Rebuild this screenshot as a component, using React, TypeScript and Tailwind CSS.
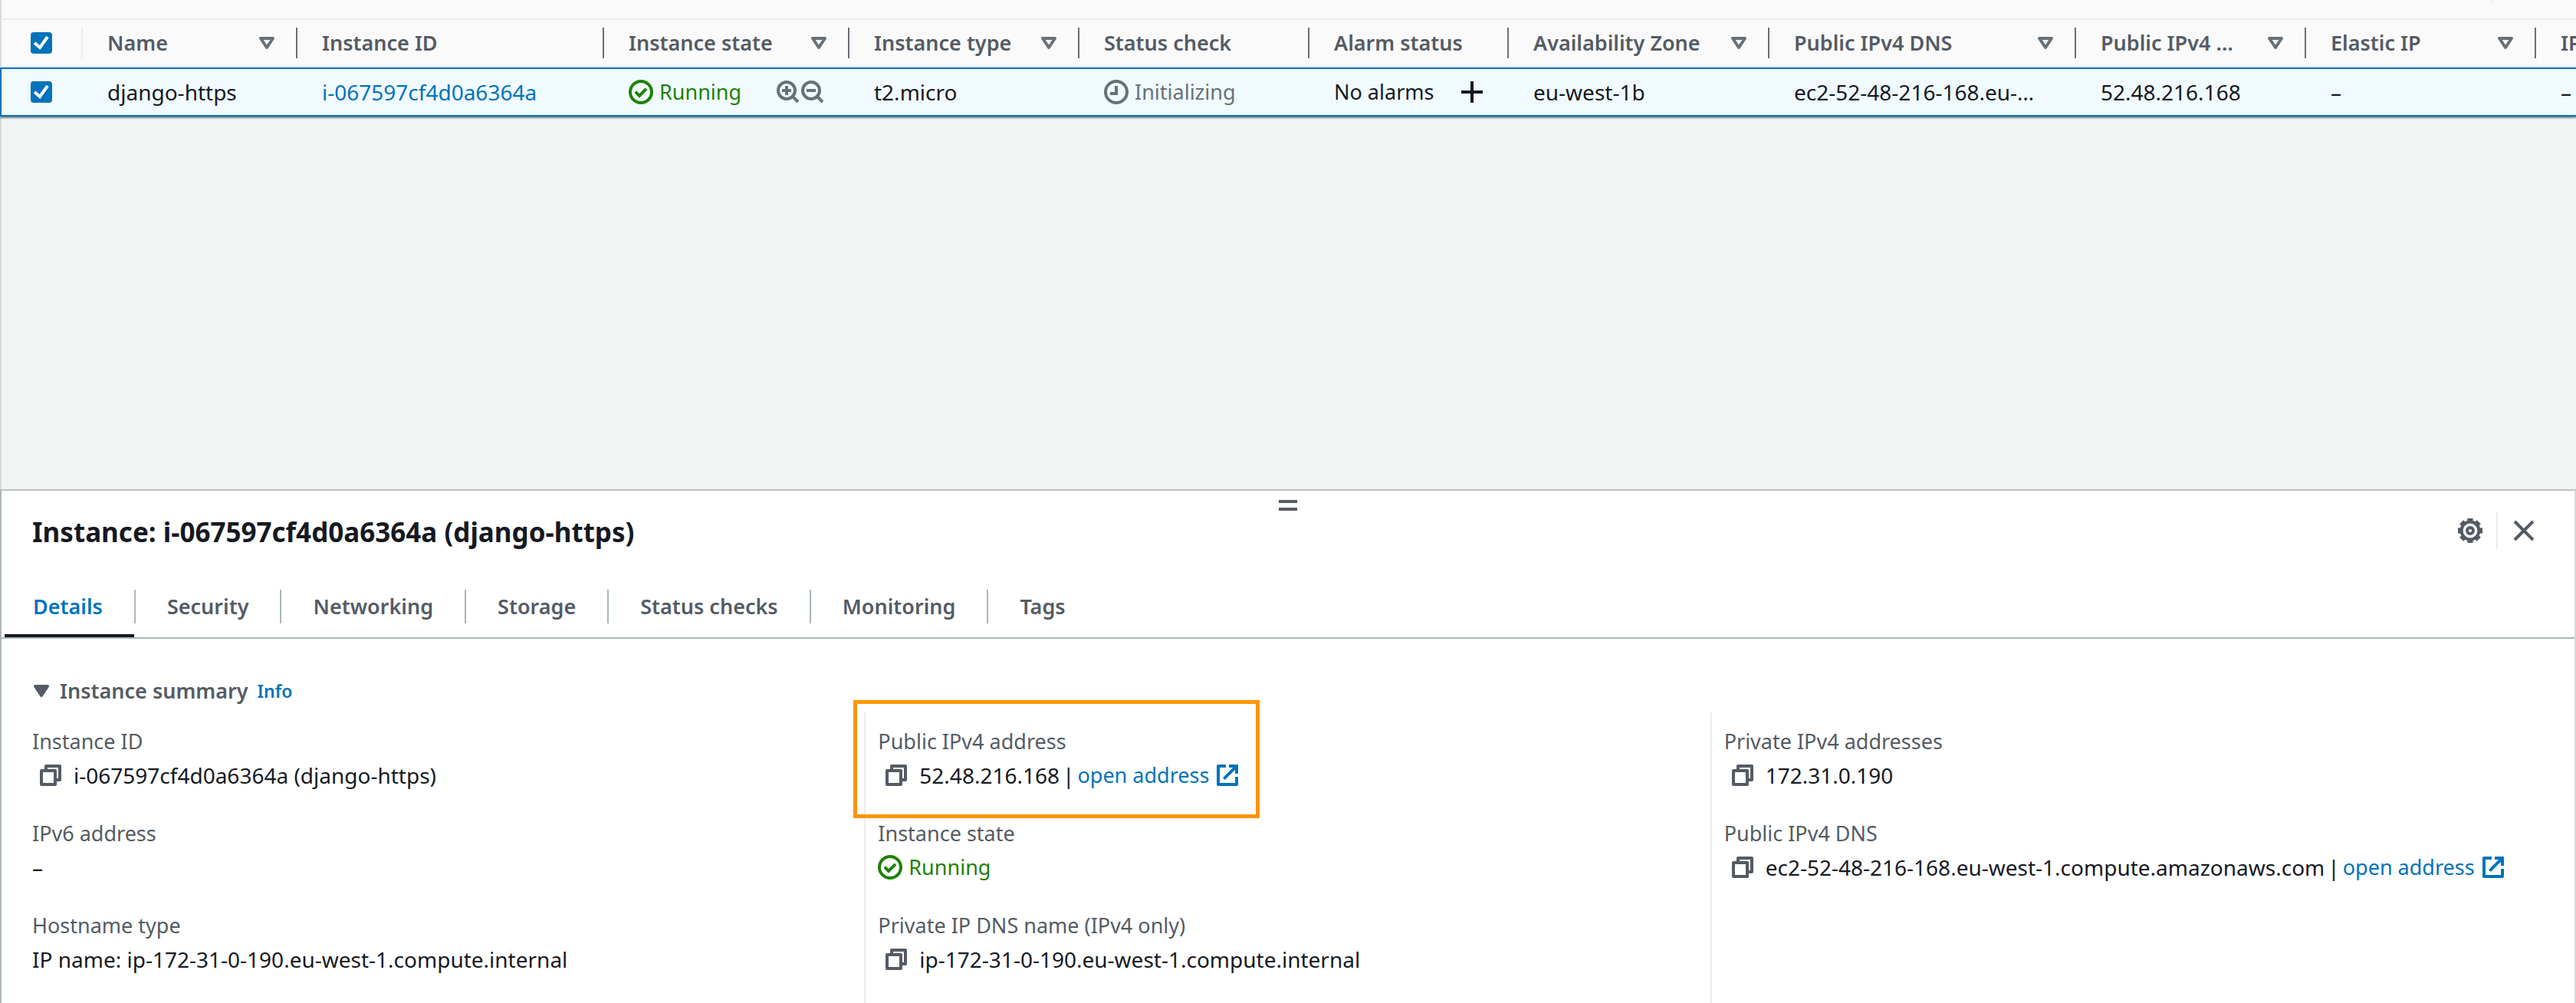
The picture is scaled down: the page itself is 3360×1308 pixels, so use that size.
import { useState, type ReactNode } from 'react'

interface Column {
  label: string
  width: string
  sortable?: boolean
}

const columns: Column[] = [
  { label: 'Name', width: 'w-[280px]', sortable: true },
  { label: 'Instance ID', width: 'w-[400px]' },
  { label: 'Instance state', width: 'w-[320px]', sortable: true },
  { label: 'Instance type', width: 'w-[300px]', sortable: true },
  { label: 'Status check', width: 'w-[300px]' },
  { label: 'Alarm status', width: 'w-[260px]' },
  { label: 'Availability Zone', width: 'w-[340px]', sortable: true },
  { label: 'Public IPv4 DNS', width: 'w-[400px]', sortable: true },
  { label: 'Public IPv4 …', width: 'w-[300px]', sortable: true },
  { label: 'Elastic IP', width: 'w-[300px]', sortable: true },
  { label: 'IPv6 IPs', width: 'w-[300px]' },
]

const tabs = ['Details', 'Security', 'Networking', 'Storage', 'Status checks', 'Monitoring', 'Tags']

function Icon({ children }: { children: ReactNode }) {
  return (
    <svg viewBox="0 0 16 16" className="size-8 shrink-0" fill="none" stroke="currentColor" strokeWidth="2" aria-hidden="true">
      {children}
    </svg>
  )
}

function CopyButton() {
  return (
    <button type="button" aria-label="Copy" className="mr-3.5 ml-2 text-[#545b64]">
      <Icon>
        <path d="M2 5h9v9H2z" strokeLinejoin="round" />
        <path d="M5 5V2h9v9h-3" strokeLinejoin="round" />
      </Icon>
    </button>
  )
}

function OpenAddress() {
  return (
    <>
      <span className="mx-1">|</span>
      <a href="#open" className="flex items-center gap-2 text-[27px] text-[#0073bb]">
        open address
        <Icon>
          <path d="M7 2H2v12h12V9" strokeLinejoin="round" />
          <path d="M9 2h5v5M14 2l-8.3 8.3" />
        </Icon>
      </a>
    </>
  )
}

function Running() {
  return (
    <span className="flex items-center gap-2 text-[27px] text-[#1d8102]">
      <Icon>
        <circle cx="8" cy="8" r="7" />
        <path d="M4.4 7.8l2.6 2.6 4.5-4.5" />
      </Icon>
      Running
    </span>
  )
}

function Checkbox({ label }: { label: string }) {
  const [checked, setChecked] = useState(true)
  return (
    <label className="ml-[38px] grid size-7">
      <input
        type="checkbox"
        aria-label={label}
        checked={checked}
        onChange={(e) => setChecked(e.target.checked)}
        className="col-start-1 row-start-1 size-7 appearance-none rounded-sm border-2 border-[#687078] bg-white checked:border-[#0073bb] checked:bg-[#0073bb]"
      />
      <svg viewBox="0 0 14 14" className="pointer-events-none col-start-1 row-start-1 size-7" fill="none" stroke="white" strokeWidth="2" aria-hidden="true">
        <path d="M2.5 7L6 10l5-7" />
      </svg>
    </label>
  )
}

function Cell({ children }: { children: ReactNode }) {
  return (
    <td className="h-16 border-y-2 border-[#0073bb] p-0">
      <div className="flex items-center justify-between px-8 whitespace-nowrap">{children}</div>
    </td>
  )
}

function Field({ label, highlighted, children }: { label: string; highlighted?: boolean; children: ReactNode }) {
  return (
    <div className="relative">
      <dt className="text-[27px] text-[#545b64]">{label}</dt>
      <dd className="flex items-center whitespace-nowrap">{children}</dd>
      {highlighted ? (
        <div className="pointer-events-none absolute -top-8 -left-8 h-[154px] w-[530px] border-5 border-[#ff9500]" />
      ) : null}
    </div>
  )
}

function InstanceTable() {
  return (
    <section className="relative shrink-0 overflow-x-clip shadow-[0_2px_2px_rgba(0,28,36,0.5)]">
      <div className="flex h-[26px] justify-end border-b-2 border-l-2 border-b-[#eaeded] border-l-[#d5dbdb] bg-[#fafafa] pr-[108px]">
        <span className="h-1 w-[2px] bg-[#eaeded]" />
      </div>
      <table className="w-[3608px] table-fixed border-separate border-spacing-0">
        <thead>
          <tr className="bg-[#fafafa] text-left text-[27px] text-[#545b64]">
            <th className="h-[62px] w-[108px] border-b-2 border-l-2 border-b-[#eaeded] border-l-[#d5dbdb] p-0">
              <div className="flex items-center justify-between">
                <Checkbox label="Select all instances" />
                <span className="h-10 w-[2px] bg-[#eaeded]" />
              </div>
            </th>
            {columns.map((column) => (
              <th key={column.label} className={`${column.width} border-b-2 border-[#eaeded] p-0 font-semibold`}>
                <div className="flex items-center pl-8 whitespace-nowrap">
                  {column.label}
                  <div className="ml-auto flex items-center gap-[22px]">
                    {column.sortable ? (
                      <button type="button" aria-label={`Sort by ${column.label}`} className="text-[#687078]">
                        <Icon>
                          <path d="M4 5h8l-4 6z" strokeLinejoin="round" />
                        </Icon>
                      </button>
                    ) : null}
                    <span className="h-10 w-[2px] bg-[#687078]" />
                  </div>
                </div>
              </th>
            ))}
          </tr>
        </thead>
        <tbody>
          <tr className="bg-[#f1faff]">
            <td className="h-16 border-y-2 border-l-2 border-[#0073bb] p-0">
              <Checkbox label="Select django-https" />
            </td>
            <Cell>django-https</Cell>
            <Cell>
              <a href="#instance" className="text-[#0073bb]">i-067597cf4d0a6364a</a>
            </Cell>
            <Cell>
              <Running />
              <span className="flex text-[#687078]">
                <button type="button" aria-label="Filter by this state">
                  <Icon>
                    <circle cx="7" cy="7" r="5.5" />
                    <path d="M10.8 10.8l3.7 3.7M4 7h6M7 4v6" />
                  </Icon>
                </button>
                <button type="button" aria-label="Exclude this state">
                  <Icon>
                    <circle cx="7" cy="7" r="5.5" />
                    <path d="M10.8 10.8l3.7 3.7M4 7h6" />
                  </Icon>
                </button>
              </span>
            </Cell>
            <Cell>t2.micro</Cell>
            <Cell>
              <span className="flex items-center gap-2 text-[27px] text-[#687078]">
                <Icon>
                  <circle cx="8" cy="8" r="7" />
                  <path d="M8 4v5H4" />
                </Icon>
                Initializing
              </span>
            </Cell>
            <Cell>
              <span className="text-[27px]">No alarms</span>
              <button type="button" aria-label="Create alarm">
                <Icon>
                  <path d="M8 1v14M1 8h14" />
                </Icon>
              </button>
            </Cell>
            <Cell>eu-west-1b</Cell>
            <Cell>ec2-52-48-216-168.eu-…</Cell>
            <Cell>52.48.216.168</Cell>
            <Cell>–</Cell>
            <Cell>–</Cell>
          </tr>
        </tbody>
      </table>
    </section>
  )
}

function Tabs() {
  const [active, setActive] = useState('Details')
  return (
    <div role="tablist" className="mt-[53px] flex items-start border-b-2 border-[#aab7b8] text-[27px] font-semibold">
      {tabs.map((tab, i) => (
        <div key={tab} className="flex items-start">
          {i > 0 ? <span className="h-11 w-[2px] bg-[#aab7b8]" /> : null}
          <button
            type="button"
            role="tab"
            aria-selected={tab === active}
            onClick={() => setActive(tab)}
            className={`relative px-[41px] pb-[18px] ${tab === active ? 'text-[#0073bb]' : 'text-[#545b64]'}`}
          >
            {tab}
            {tab === active ? <span className="absolute right-0 bottom-0 left-1 h-1 bg-[#16191f]" /> : null}
          </button>
        </div>
      ))}
    </div>
  )
}

function DetailsPanel() {
  return (
    <section className="flex flex-1 flex-col border-t-2 border-r-2 border-l-2 border-t-[#bcc3c4] border-r-[#d5dbdb] border-l-[#aab7b8] bg-white">
      <button type="button" aria-label="Resize panel" className="flex flex-col gap-1.5 self-center pt-3">
        <span className="h-1 w-6 bg-[#545b64]" />
        <span className="h-1 w-6 bg-[#545b64]" />
      </button>

      <header className="mt-[2px] flex h-12 items-center pr-[50px] pl-10">
        <h2 className="pt-1 text-[35px] leading-[48px] font-bold">Instance: i-067597cf4d0a6364a (django-https)</h2>
        <div className="ml-auto flex items-center gap-[18px] text-[#545b64]">
          <button type="button" aria-label="Preferences">
            <Icon>
              <circle cx="8" cy="8" r="5.7" />
              <circle cx="8" cy="8" r="2" />
              {[0, 45, 90, 135, 180, 225, 270, 315].map((angle) => (
                <path key={angle} d="M8 0v2.5" strokeWidth="3.6" transform={`rotate(${angle} 8 8)`} />
              ))}
            </Icon>
          </button>
          <span className="h-12 w-[2px] bg-[#eaeded]" />
          <button type="button" aria-label="Close panel">
            <Icon>
              <path d="M2 2l12 12M14 2L2 14" />
            </Icon>
          </button>
        </div>
      </header>

      <Tabs />

      <div className="mt-[46px] flex items-center pl-9 text-[#545b64]">
        <button type="button" aria-expanded="true" className="flex items-center gap-2 text-[27px] font-semibold">
          <Icon>
            <path d="M4 5h8l-4 6z" fill="currentColor" strokeLinejoin="round" />
          </Icon>
          Instance summary
        </button>
        <a href="#info" className="ml-3 text-[23px] font-semibold text-[#0073bb]">Info</a>
      </div>

      <div className="mt-1.5 grid flex-1 grid-cols-3 pr-6 pl-[22px]">
        <dl className="flex flex-col gap-8 border-l-2 border-transparent pt-4 pl-4">
          <Field label="Instance ID"><CopyButton />i-067597cf4d0a6364a (django-https)</Field>
          <Field label="IPv6 address">–</Field>
          <Field label="Hostname type">IP name: ip-172-31-0-190.eu-west-1.compute.internal</Field>
        </dl>
        <dl className="flex flex-col gap-8 border-l-2 border-[#eaeded] pt-4 pl-4">
          <Field label="Public IPv4 address" highlighted><CopyButton />52.48.216.168<OpenAddress /></Field>
          <Field label="Instance state"><Running /></Field>
          <Field label="Private IP DNS name (IPv4 only)"><CopyButton />ip-172-31-0-190.eu-west-1.compute.internal</Field>
        </dl>
        <dl className="flex flex-col gap-8 border-l-2 border-[#eaeded] pt-4 pl-4">
          <Field label="Private IPv4 addresses"><CopyButton />172.31.0.190</Field>
          <Field label="Public IPv4 DNS">
            <CopyButton />ec2-52-48-216-168.eu-west-1.compute.amazonaws.com<OpenAddress />
          </Field>
        </dl>
      </div>
    </section>
  )
}

export default function App() {
  return (
    <div className="flex h-screen flex-col overflow-hidden bg-[#f2f3f3] font-['Noto_Sans','Open_Sans',sans-serif] text-[28px] leading-[44px] text-[#16191f]">
      <InstanceTable />
      <div className="h-[486px] shrink-0 border-l-2 border-[#d5dbdb]" />
      <DetailsPanel />
    </div>
  )
}
